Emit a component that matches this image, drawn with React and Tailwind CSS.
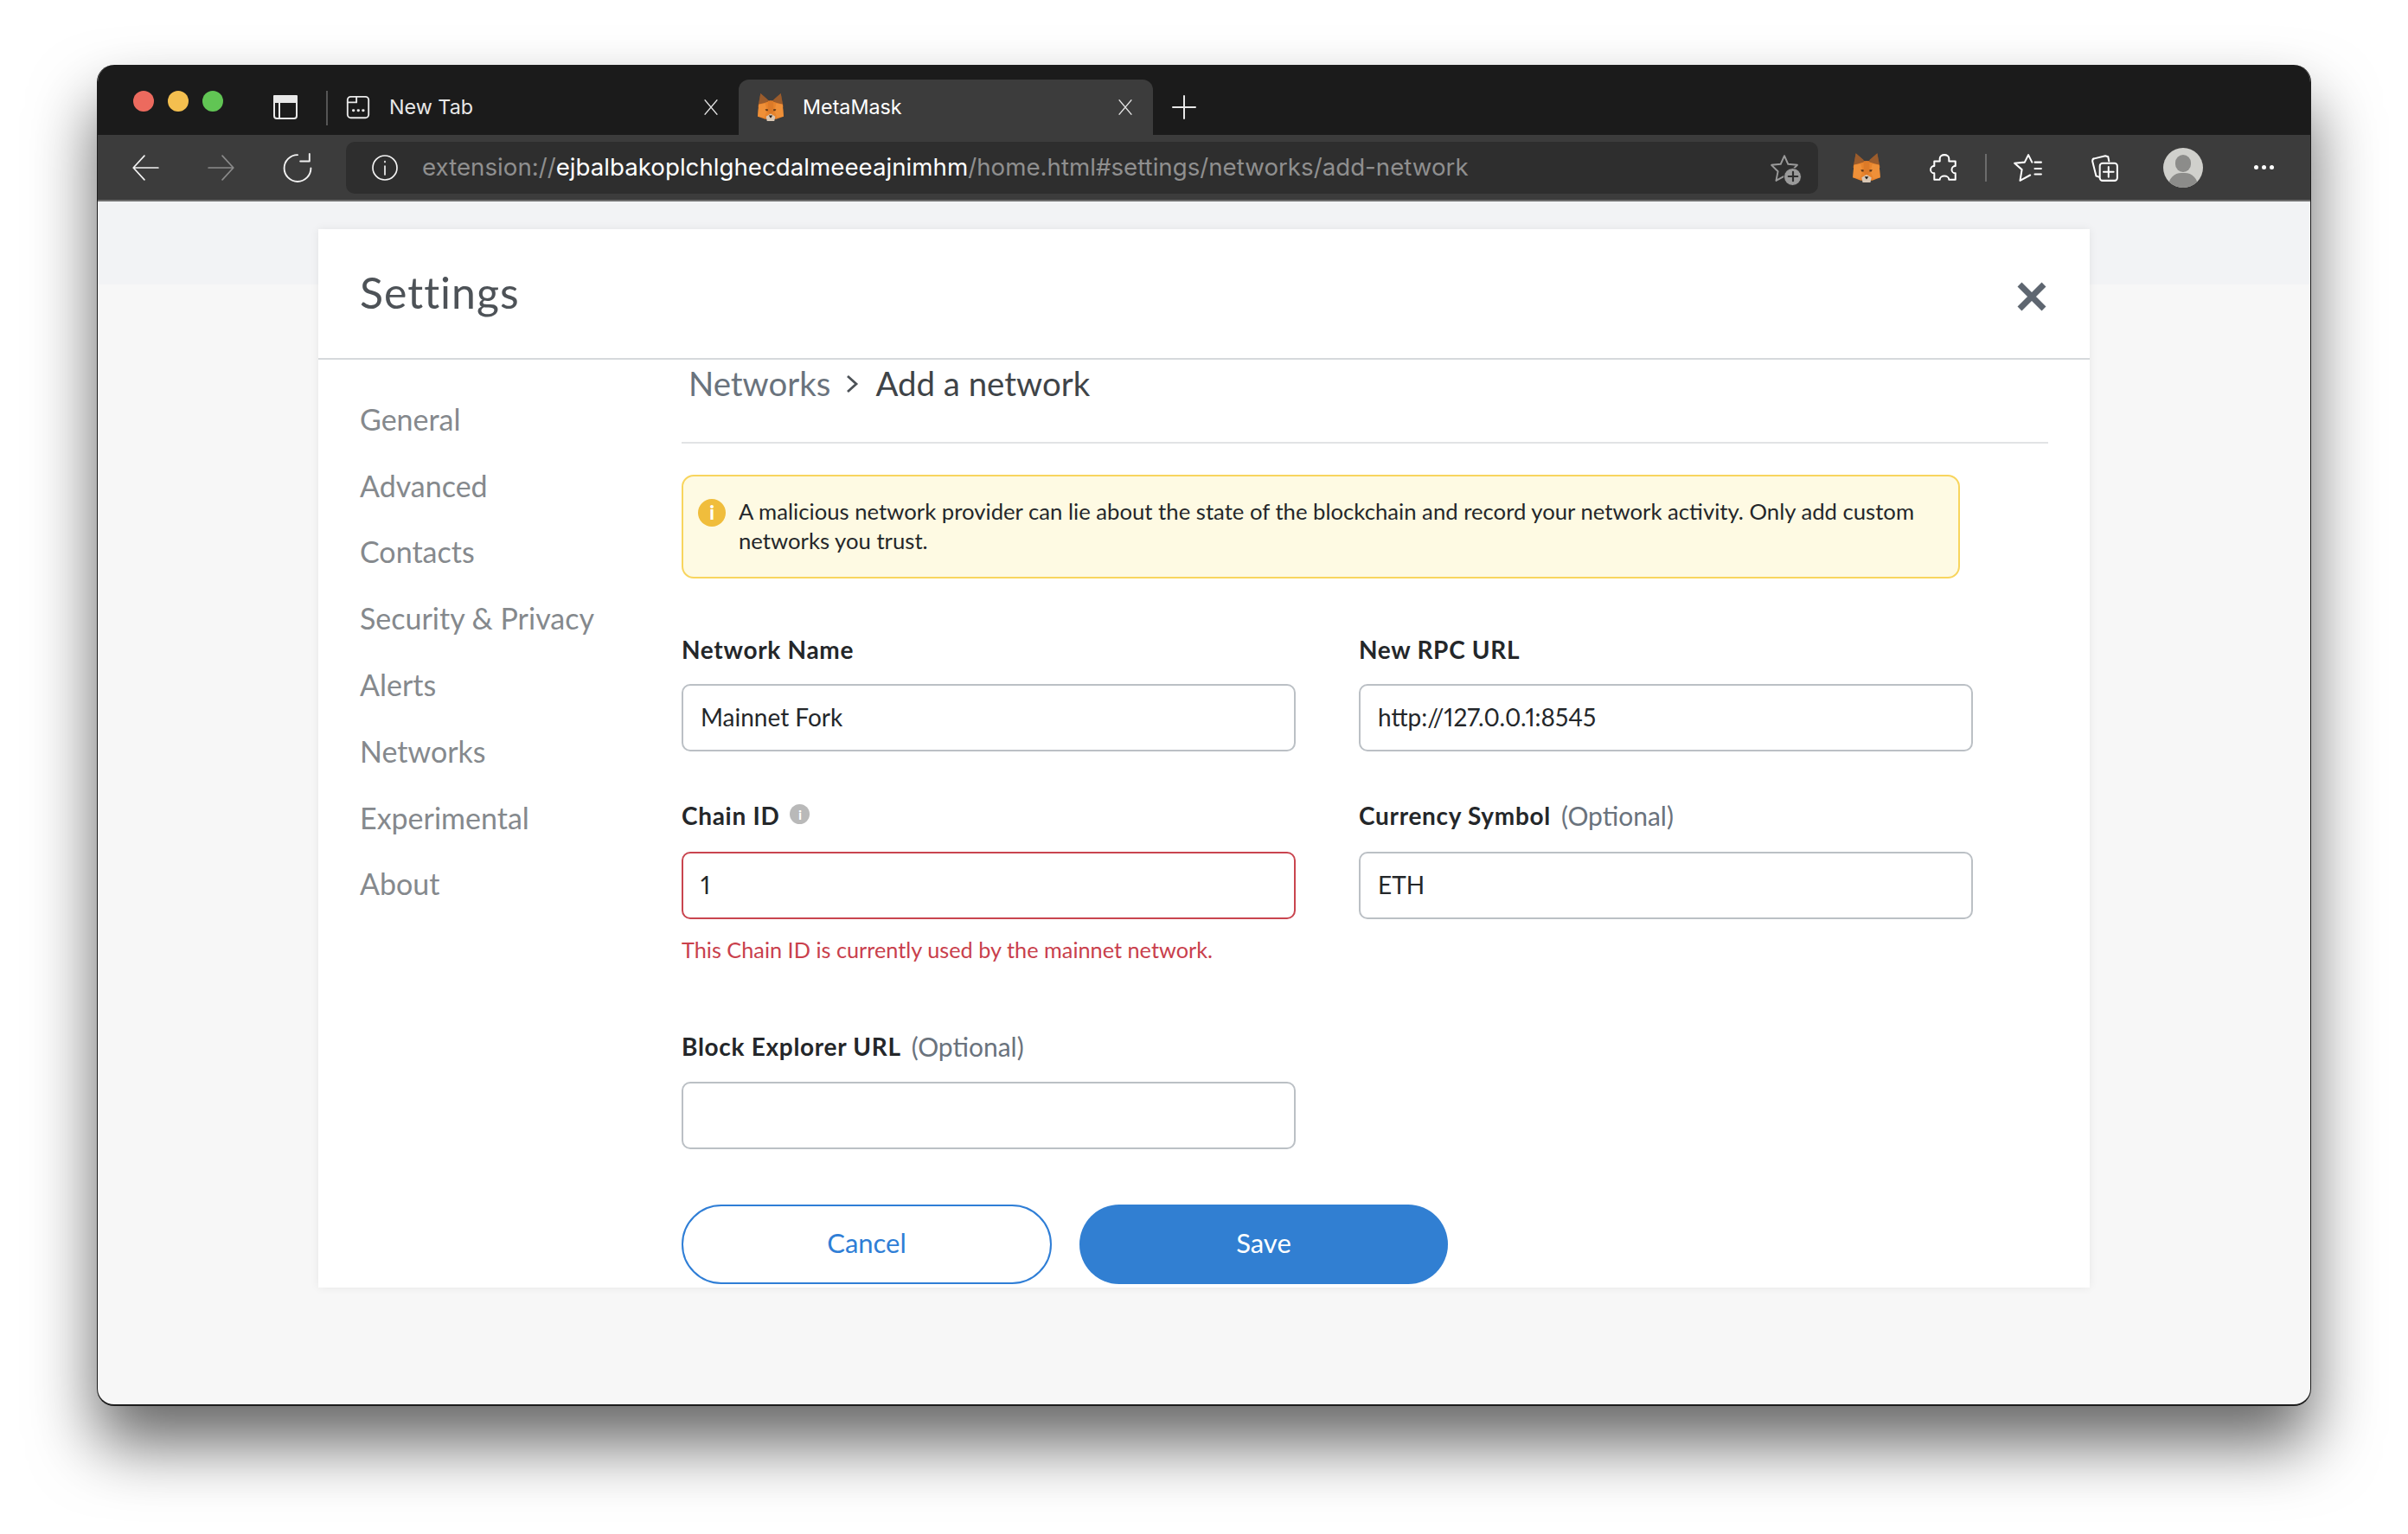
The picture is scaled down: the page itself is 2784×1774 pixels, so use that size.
import React from "react";

const UI_FONT = "font-['Lato','Noto_Sans',sans-serif]";

function Fox({ size = 36 }) {
  return (
    <svg width={size} height={size} viewBox="0 0 32 32">
      <polygon points="5,1 14,9 18,9 27,1 30,16 2,16" fill="#8a5128" />
      <polygon points="5,1 13,8 10,15 3,13" fill="#9b5c2c" />
      <polygon points="27,1 19,8 22,15 29,13" fill="#9b5c2c" />
      <polygon points="10,11 16,9 22,11 29,13 30,26 22,29 10,29 2,26 3,13" fill="#e8842c" />
      <polygon points="3,13 10,12 12,20 9,27 2,26" fill="#ef9038" />
      <polygon points="29,13 22,12 20,20 23,27 30,26" fill="#ef9038" />
      <polygon points="13,9 19,9 19,21 16,24 13,21" fill="#dc7a28" />
      <polygon points="10,18 13,18 13,20 11,20" fill="#5a3518" />
      <polygon points="22,18 19,18 19,20 21,20" fill="#5a3518" />
      <polygon points="11,26 16,23 21,26 20,31 12,31" fill="#d9c7b4" />
      <polygon points="14,25 18,25 16,28" fill="#1d1a18" />
    </svg>
  );
}

function Stroke({ size = 32, children, className = "", sw = 2 }) {
  return (
    <svg
      width={size}
      height={size}
      viewBox="0 0 32 32"
      fill="none"
      stroke="currentColor"
      strokeWidth={sw}
      strokeLinecap="round"
      strokeLinejoin="round"
      className={className}
    >
      {children}
    </svg>
  );
}

function TabClose() {
  return (
    <Stroke size={20} sw={2.4} className="text-[#e4e4e4]">
      <path d="M5 3 27 29M27 3 5 29" />
    </Stroke>
  );
}

function Label({ children, hint, info }) {
  return (
    <div className="flex items-center h-[40px] text-[28px] font-bold tracking-[0.7px] text-[#24272a]">
      <span>{children}</span>
      {hint && <span className="ml-3 text-[30px] tracking-normal font-normal text-[#6a737d]">{hint}</span>}
      {info && (
        <span className="ml-3 -mt-[3px] w-[23px] h-[23px] rounded-full bg-[#b9b9b9] text-white text-[16px] tracking-normal font-bold flex items-center justify-center">
          i
        </span>
      )}
    </div>
  );
}

function Input({ value, error, className = "" }) {
  return (
    <input
      readOnly
      value={value}
      className={`block w-full h-[78px] pl-[20px] pr-[20px] pb-[2px] rounded-[10px] border-2 bg-white text-[28px] proportional-nums text-[#24272a] outline-none ${
        error ? "border-[#c9454f]" : "border-[#bbc0c5]"
      } ${className}`}
    />
  );
}

const navItems = [
  "General",
  "Advanced",
  "Contacts",
  "Security & Privacy",
  "Alerts",
  "Networks",
  "Experimental",
  "About",
];

export default function App() {
  return (
    <div className="w-[2784px] h-[1774px] bg-white pt-[75px] pl-[112px] overflow-hidden">
      <div className="w-[2560px] h-[1551px] rounded-[20px] overflow-hidden flex flex-col shadow-[0_44px_76px_rgba(0,0,0,0.6)] border border-t-0 border-[#1c1c1c] border-b-2 bg-[#f7f7f7]">
        {/* title bar */}
        <div className="h-[81px] shrink-0 bg-[#1b1b1b] flex items-end font-['Inter',sans-serif] text-white">
          <div className="h-full flex items-center pl-[41px] pt-[3px] gap-[16px]">
            <span className="w-[24px] h-[24px] rounded-full bg-[#ec6a5e]" />
            <span className="w-[24px] h-[24px] rounded-full bg-[#f4bf4f]" />
            <span className="w-[24px] h-[24px] rounded-full bg-[#61c554]" />
          </div>
          <div className="h-full flex items-center pt-[17px] ml-[56px]">
            <Stroke size={32} sw={2} className="text-[#e8e8e8]">
              <rect x="3" y="3" width="26" height="26" rx="3" />
              <path d="M3 10H29M9 10V29" />
              <rect x="3" y="3" width="26" height="7" fill="currentColor" />
            </Stroke>
          </div>
          <div className="h-[40px] w-[2px] bg-[#555] mb-[11px] ml-[31px]" />
          <div className="h-[64px] w-[475px] flex items-center pl-[20px] pr-[22px]">
            <Stroke size={30} sw={2} className="text-[#e8e8e8]">
              <rect x="3" y="3" width="26" height="26" rx="4" />
              <path d="M3 10H14V3" />
              <path d="M10 20h.6M16 20h.6M22 20h.6" strokeWidth="3" />
            </Stroke>
            <span className="ml-[21px] text-[23.3px] text-[#e8e8e8]">New Tab</span>
            <span className="ml-auto">
              <TabClose />
            </span>
          </div>
          <div className="h-[64px] w-[479px] bg-[#3c3c3c] rounded-t-[12px] flex items-center pl-[20px] pr-[22px]">
            <Fox size={34} />
            <span className="ml-[20px] text-[23.3px] text-white">MetaMask</span>
            <span className="ml-auto">
              <TabClose />
            </span>
          </div>
          <div className="h-[64px] flex items-center ml-[20px]">
            <Stroke size={32} sw={2} className="text-[#e8e8e8]">
              <path d="M16 3V29M3 16H29" />
            </Stroke>
          </div>
        </div>

        {/* toolbar */}
        <div className="h-[77px] shrink-0 bg-[#3c3c3c] border-b-2 border-[#6e6e6e] flex items-center text-white">
          <div className="flex items-center w-[287px] pl-[38px] gap-[54px]">
            <Stroke size={34} sw={1.6} className="text-[#f2f2f2]">
              <path d="M30 16H3M15 3 3 16 15 29" />
            </Stroke>
            <Stroke size={34} sw={1.6} className="text-[#8a8a8a]">
              <path d="M2 16H29M17 3 29 16 17 29" />
            </Stroke>
            <Stroke size={34} sw={1.8} className="text-[#f2f2f2]">
              <path d="M16 2A14.5 14.5 0 1 0 30.5 16.5" />
              <path d="M29 1V9H19" />
            </Stroke>
          </div>
          <div className="w-[1702px] h-[60px] rounded-[10px] bg-[#2e2e2e] flex items-center pl-[29px] pr-[22px] font-['Inter',sans-serif] text-[27.7px]">
            <Stroke size={32} sw={1.7} className="text-[#f2f2f2]">
              <circle cx="16" cy="16" r="14" />
              <path d="M16 14V24M16 8.5V9.5" />
            </Stroke>
            <span className="ml-[27px] text-[#8f8f8f] whitespace-nowrap">
              extension://
              <span className="text-white">ejbalbakoplchlghecdalmeeeajnimhm</span>
              /home.html#settings/networks/add-network
            </span>
            <span className="ml-auto relative flex text-[#9a9a9a]">
              <Stroke size={34} sw={1.8}>
                <path d="M16 3 20 12 30 13 23 20 25 30 16 25 7 30 9 20 2 13 12 12Z" />
              </Stroke>
              <span className="absolute right-[-3px] bottom-[-4px] w-[21px] h-[21px] rounded-full bg-[#9a9a9a] border border-[#2e2e2e] text-[#2e2e2e] flex items-center justify-center">
                <Stroke size={14} sw={5}>
                  <path d="M16 4V28M4 16H28" />
                </Stroke>
              </span>
            </span>
          </div>
          <div className="flex items-center pl-[38px] w-[569px]">
            <Fox size={36} />
            <Stroke size={34} sw={1.9} className="ml-[55px] text-white">
              <path d="M11 6a5 4 0 0 1 10 0V9h7V14a4 4 0 0 0 0 8V29H21a5 4 0 0 0-10 0H5V22a4 4 0 0 1 0-8V9h6z" />
            </Stroke>
            <div className="ml-[30px] w-[2px] h-[32px] bg-[#6c6c6c]" />
            <Stroke size={34} sw={1.9} className="ml-[30px] text-white">
              <path d="M21 10 17 2 13 10 2 11 10 18 8 30 19 24" />
              <path d="M24 10H31M24 17H31M24 23H31" />
            </Stroke>
            <Stroke size={34} sw={1.9} className="ml-[55px] text-white">
              <path d="M10 26 7 25 3 9c0-2 1-3 2-3l12-3 3 1 1 5" />
              <rect x="11" y="11" width="19" height="19" rx="3" />
              <path d="M20.5 15v11M15 20.5h11" />
            </Stroke>
            <div className="ml-[51px] w-[46px] h-[46px] rounded-full bg-[#d0d0cc] relative overflow-hidden">
              <span className="absolute left-[14px] top-[8px] w-[18px] h-[20px] rounded-full bg-[#8c8c8a]" />
              <span className="absolute left-[6px] top-[29px] w-[34px] h-[30px] rounded-full bg-[#8c8c8a]" />
            </div>
            <div className="ml-[59px] flex gap-[4px]">
              <span className="w-[5px] h-[5px] rounded-full bg-white" />
              <span className="w-[5px] h-[5px] rounded-full bg-white" />
              <span className="w-[5px] h-[5px] rounded-full bg-white" />
            </div>
          </div>
        </div>

        {/* page */}
        <div className={`relative flex-1 pt-[32px] pl-[255px] ${UI_FONT}`}>
          <div className="absolute left-0 right-0 top-0 h-[96px] bg-[#f2f3f5]" />
          <div className="relative w-[2048px] bg-white shadow-[0_0_10px_rgba(0,0,0,0.07)]">
            <div className="h-[151px] border-b-2 border-[#d6d9dc] flex items-center justify-between pl-[48px] pr-[50px]">
              <div className="text-[50px] tracking-[1px] text-[#4d5257] -mt-[3px]">Settings</div>
              <svg width="34" height="34" viewBox="0 0 34 34" className="mt-[7px]">
                <path d="M3 3 31 31M31 3 3 31" stroke="#5e6670" strokeWidth="7" />
              </svg>
            </div>
            <div className="flex">
              <div className="w-[420px] pt-[30px] pl-[48px] shrink-0">
                {navItems.map((item) => (
                  <div key={item} className="h-[76.8px] flex items-center text-[34px] text-[#85898d] whitespace-nowrap">
                    {item}
                  </div>
                ))}
              </div>
              <div className="w-[1580px] pb-[4px]">
                <div className="h-[97px] border-b-2 border-[#e1e3e5] pl-[8px] pb-[40px] flex items-center text-[38.4px] whitespace-nowrap">
                  <span className="text-[#6a737d]">Networks</span>
                  <svg width="18" height="26" viewBox="0 0 18 26" className="ml-[16px] mr-[18px]">
                    <path d="M4 4 14 13 4 22" fill="none" stroke="#4d5257" strokeWidth="2.8" />
                  </svg>
                  <span className="text-[#3f4448]">Add a network</span>
                </div>
                <div className="mt-[36px] w-[1478px] h-[120px] rounded-[14px] border-2 border-[#f8d55e] bg-[#fefae3] flex items-center pl-[17px] text-[25.7px] leading-[34px] text-[#24272a]">
                  <span className="w-[32px] h-[32px] rounded-full bg-[#f0bd3c] text-white text-[22px] font-black flex items-center justify-center shrink-0 -mt-[32px]">
                    i
                  </span>
                  <p className="ml-[15px] -mt-[3px] whitespace-nowrap">
                    A malicious network provider can lie about the state of the blockchain and record your network activity. Only add custom
                    <br />
                    networks you trust.
                  </p>
                </div>

                <div className="grid grid-cols-[710px_710px] gap-x-[73px] items-start">
                  <div className="mt-[62px]">
                    <Label>Network Name</Label>
                    <Input value="Mainnet Fork" className="mt-[20px]" />
                  </div>
                  <div className="mt-[62px]">
                    <Label>New RPC URL</Label>
                    <Input value="http://127.0.0.1:8545" className="mt-[20px]" />
                  </div>
                  <div className="mt-[54px]">
                    <Label info>Chain ID</Label>
                    <Input value="1" error className="mt-[22px]" />
                    <div className="mt-[20px] h-[30px] leading-[30px] text-[25.3px] text-[#c9404c]">
                      This Chain ID is currently used by the mainnet network.
                    </div>
                  </div>
                  <div className="mt-[54px]">
                    <Label hint="(Optional)">Currency Symbol</Label>
                    <Input value="ETH" className="mt-[22px]" />
                  </div>
                  <div className="mt-[77px]">
                    <Label hint="(Optional)">Block Explorer URL</Label>
                    <Input value="" className="mt-[21px]" />
                  </div>
                </div>

                <div className="mt-[64px] flex gap-[32px] text-[31px]">
                  <button className="w-[428px] h-[92px] pb-[4px] rounded-full border-2 border-[#2f7ed6] bg-white text-[#2f7ed6]">
                    Cancel
                  </button>
                  <button className="w-[426px] h-[92px] pb-[4px] rounded-full bg-[#317fd2] text-white">
                    Save
                  </button>
                </div>
              </div>
            </div>
          </div>
        </div>
      </div>
    </div>
  );
}
